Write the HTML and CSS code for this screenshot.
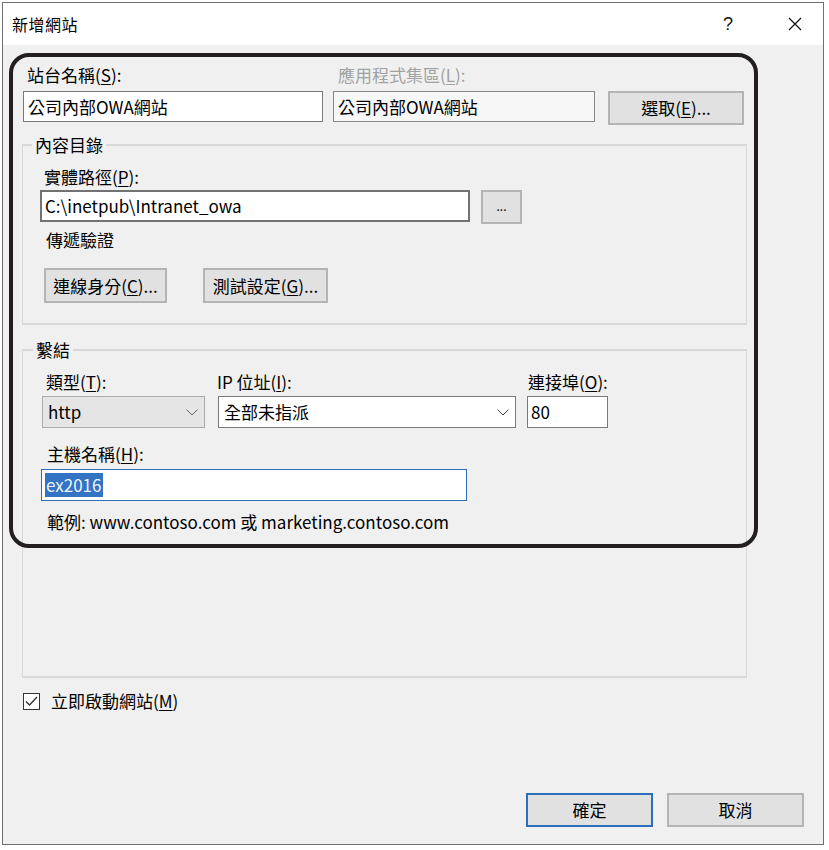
FILE: index.html
```html
<!DOCTYPE html>
<html lang="zh-Hant">
<head>
<meta charset="utf-8">
<title>新增網站</title>
<link rel="stylesheet" href="styles.css">
</head>
<body>
<div class="window">
  <div class="titlebar">
    <span class="title">新增網站</span>
    <span class="help">?</span>
    <span class="close">
      <svg width="14" height="14" viewBox="0 0 14 14"><path d="M1 1 L13 13 M13 1 L1 13" stroke="#111" stroke-width="1.2" fill="none"/></svg>
    </span>
  </div>
  <div class="content">
    <div class="row-site">
      <div class="field site-name">
        <div class="lbl">站台名稱(<u>S</u>):</div>
        <div class="textbox">公司內部OWA網站</div>
      </div>
      <div class="field app-pool">
        <div class="lbl disabled">應用程式集區(<u>L</u>):</div>
        <div class="textbox readonly">公司內部OWA網站</div>
      </div>
      <div class="btn btn-select">選取(<u>E</u>)...</div>
    </div>

    <fieldset class="group group-dir">
      <legend>內容目錄</legend>
      <div class="lbl lbl-path">實體路徑(<u>P</u>):</div>
      <div class="path-row">
        <div class="textbox path-box">C:\inetpub\Intranet_owa</div>
        <div class="btn btn-browse">...</div>
      </div>
      <div class="lbl lbl-pass">傳遞驗證</div>
      <div class="auth-row">
        <div class="btn btn-connect">連線身分(<u>C</u>)...</div>
        <div class="btn btn-test">測試設定(<u>G</u>)...</div>
      </div>
    </fieldset>

    <fieldset class="group group-bind">
      <legend>繫結</legend>
      <div class="bind-row">
        <div class="field f-type">
          <div class="lbl">類型(<u>T</u>):</div>
          <div class="combo combo-disabled">http
            <svg class="chev" width="12" height="7" viewBox="0 0 12 7"><path d="M0.5 0.5 L6 6 L11.5 0.5" stroke="#666" stroke-width="1" fill="none"/></svg>
          </div>
        </div>
        <div class="field f-ip">
          <div class="lbl">IP 位址(<u>I</u>):</div>
          <div class="combo">全部未指派
            <svg class="chev" width="12" height="7" viewBox="0 0 12 7"><path d="M0.5 0.5 L6 6 L11.5 0.5" stroke="#444" stroke-width="1" fill="none"/></svg>
          </div>
        </div>
        <div class="field f-port">
          <div class="lbl">連接埠(<u>O</u>):</div>
          <div class="textbox">80</div>
        </div>
      </div>
      <div class="lbl lbl-host">主機名稱(<u>H</u>):</div>
      <div class="textbox host-box"><span class="sel">ex2016</span></div>
      <div class="lbl lbl-example">範例: www.contoso.com 或 marketing.contoso.com</div>
    </fieldset>

    <div class="check-row">
      <span class="checkbox">
        <svg width="13" height="11" viewBox="0 0 13 11"><path d="M1 5.5 L4.5 9 L12 1" stroke="#333" stroke-width="1.4" fill="none"/></svg>
      </span>
      <span class="check-label">立即啟動網站(<u>M</u>)</span>
    </div>

    <div class="footer">
      <div class="btn btn-ok">確定</div>
      <div class="btn btn-cancel">取消</div>
    </div>
  </div>
  <div class="annotation"></div>
</div>
</body>
</html>
```

FILE: styles.css
```css
* { box-sizing: border-box; }
html, body { margin: 0; background: #fff; }
body {
  font-family: "Noto Sans CJK TC", "Noto Sans", sans-serif;
  font-size: 17px;
  color: #000;
}
u { text-decoration-thickness: 1px; text-underline-offset: 2px; }

.window {
  position: relative;
  margin: 2px 0 0 2px;
  width: 822px;
  height: 843px;
  border: 1px solid #6f6f6f;
  display: flex;
  flex-direction: column;
}

.titlebar {
  height: 42px;
  background: #fff;
  display: flex;
  align-items: center;
  padding-left: 9px;
  flex: none;
}
.title { font-size: 16px; line-height: 20px; letter-spacing: 0.5px; }
.help { margin-left: auto; font-family: "Liberation Sans", sans-serif; font-size: 18px; line-height: 20px; margin-right: 55px; color: #111; }
.close { display: flex; margin-right: 21px; }

.content {
  flex: 1;
  background: #f0f0f0;
  padding: 20px 0 17px 19px;
  display: flex;
  flex-direction: column;
}

.lbl { line-height: 20px; white-space: nowrap; }
.lbl.disabled { color: #a2a2a2; }

.textbox {
  height: 31px;
  border: 1px solid #7a7a7a;
  background: #fff;
  padding: 0 4px;
  line-height: 29px;
  white-space: nowrap;
  overflow: hidden;
}
.textbox.readonly { background: #f7f7f7; border-color: #858585; }

.btn {
  display: flex;
  align-items: center;
  justify-content: center;
  background: #e1e1e1;
  border: 2px solid #b4b4b4;
  line-height: 20px;
  white-space: nowrap;
}

/* site row */
.row-site { display: flex; align-items: flex-start; margin-left: 1px; }
.field { display: flex; flex-direction: column; }
.field .lbl { margin-bottom: 6px; }
.site-name { width: 300px; }
.site-name .lbl { padding-left: 4px; }
.app-pool { width: 262px; margin-left: 10px; }
.app-pool .lbl { padding-left: 5px; }
.btn-select { width: 136px; height: 34px; margin-left: 13px; margin-top: 26px; }

/* groups */
.group {
  margin: 0;
  width: 725px;
  border: 1px solid #d9d9d9;
  border-width: 2px 1px 2px 1px;
  min-width: 0;
}
.group legend {
  padding: 0 3px;
  margin-left: -8px;
  line-height: 20px;
}
.group-dir { margin-top: 10px; padding: 12px 0 20px 17px; }
.group-bind legend { margin-left: -9px; }
.lbl-path { padding-left: 4px; margin-bottom: 3px; }
.path-row { display: flex; align-items: flex-start; }
.path-box { width: 430px; height: 32px; border: 2px solid #727272; padding-left: 3px; line-height: 28px; }
.btn-browse { width: 41px; height: 34px; margin-left: 11px; align-items: flex-end; padding-bottom: 6px; font-size: 12px; }
.lbl-pass { padding-left: 6px; margin-top: 6px; }
.auth-row { display: flex; margin-top: 18px; margin-left: 4px; }
.btn-connect { width: 123px; height: 35px; }
.btn-test { width: 125px; height: 35px; margin-left: 36px; }

.group-bind { margin-top: 15px; padding: 12px 0 144px 19px; }
.bind-row { display: flex; align-items: flex-start; }
.bind-row .field .lbl { margin-bottom: 4px; }
.f-type { width: 163px; }
.f-type .lbl { padding-left: 4px; }
.f-ip { width: 298px; margin-left: 13px; }
.f-ip .lbl { margin-left: -1px; }
.f-port { width: 81px; margin-left: 11px; }
.f-port .lbl { padding-left: 1px; }
.f-port .textbox { height: 32px; padding-left: 3px; }

.combo {
  position: relative;
  height: 32px;
  border: 1px solid #7a7a7a;
  background: #fff;
  padding: 0 5px;
  line-height: 30px;
  display: flex;
  align-items: center;
}
.combo-disabled { background: #e5e5e5; border-color: #acacac; }
.chev { position: absolute; right: 6px; top: 12px; }

.lbl-host { padding-left: 5px; margin-top: 16px; margin-bottom: 5px; }
.host-box {
  width: 426px;
  height: 32px;
  margin-left: -1px;
  border: 1px solid #2d6fbb;
  padding: 3px 0 0 3px;
  line-height: 24px;
}
.sel { background: #3274c3; color: #eef3fb; display: inline-block; padding: 0 1px; line-height: 24px; }
.lbl-example { padding-left: 5px; margin-top: 11px; }

/* checkbox */
.check-row { display: flex; align-items: center; margin-top: 13px; margin-left: 1px; line-height: 20px; }
.checkbox {
  width: 17px;
  height: 17px;
  border: 1px solid #333;
  background: #fff;
  display: flex;
  align-items: center;
  justify-content: center;
}
.check-label { margin-left: 11px; }

/* footer */
.footer { margin-top: auto; display: flex; justify-content: flex-end; padding-right: 19px; }
.btn-ok { width: 127px; height: 34px; border: 2px solid #2b6fb9; }
.btn-cancel { width: 137px; height: 34px; margin-left: 14px; }

/* annotation overlay */
.annotation {
  position: absolute;
  left: 6px;
  top: 50px;
  width: 749px;
  height: 495px;
  border: 4px solid #231f20;
  border-radius: 20px;
  pointer-events: none;
}
```
